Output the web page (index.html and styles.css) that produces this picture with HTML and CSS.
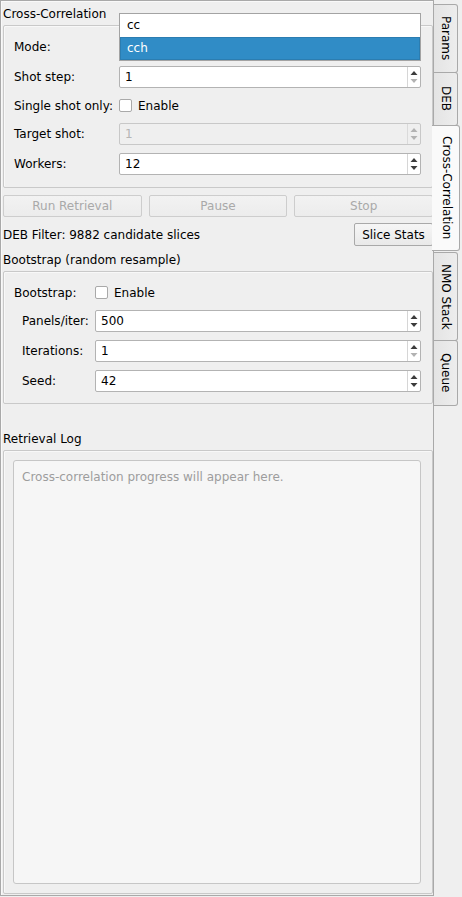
FILE: index.html
```html
<!DOCTYPE html>
<html lang="en">
<head>
<meta charset="utf-8">
<title>Cross-Correlation</title>
<link rel="stylesheet" href="styles.css">
</head>
<body>
<div class="window">
  <main class="pane">
    <div class="group-title">Cross-Correlation</div>
    <section class="frame frame-cc">
      <div class="form form-cc">
        <span class="lbl">Mode:</span>
        <div class="combo" aria-label="cch"></div>

        <span class="lbl">Shot step:</span>
        <div class="spin"><span class="val">1</span><span class="arrows"><svg width="12" height="20" viewBox="0 0 12 20"><path class="up" d="M2.5 8 L6 4 L9.5 8 Z"/><path class="dn off" d="M2.5 12 L6 16 L9.5 12 Z"/></svg></span></div>

        <span class="lbl">Single shot only:</span>
        <div class="check"><span class="box"></span><span>Enable</span></div>

        <span class="lbl">Target shot:</span>
        <div class="spin disabled"><span class="val">1</span><span class="arrows"><svg width="12" height="20" viewBox="0 0 12 20"><path class="up off" d="M2.5 8 L6 4 L9.5 8 Z"/><path class="dn off" d="M2.5 12 L6 16 L9.5 12 Z"/></svg></span></div>

        <span class="lbl">Workers:</span>
        <div class="spin"><span class="val">12</span><span class="arrows"><svg width="12" height="20" viewBox="0 0 12 20"><path class="up" d="M2.5 8 L6 4 L9.5 8 Z"/><path class="dn" d="M2.5 12 L6 16 L9.5 12 Z"/></svg></span></div>
      </div>
    </section>

    <div class="actions">
      <button class="btn" disabled>Run Retrieval</button>
      <button class="btn" disabled>Pause</button>
      <button class="btn" disabled>Stop</button>
    </div>

    <div class="filter-row">
      <span>DEB Filter: 9882 candidate slices</span>
      <button class="btn btn-stats">Slice Stats</button>
    </div>

    <div class="group-title gt-boot">Bootstrap (random resample)</div>
    <section class="frame frame-boot">
      <div class="form form-boot">
        <span class="lbl">Bootstrap:</span>
        <div class="check"><span class="box"></span><span>Enable</span></div>

        <span class="lbl sub">Panels/iter:</span>
        <div class="spin"><span class="val">500</span><span class="arrows"><svg width="12" height="20" viewBox="0 0 12 20"><path class="up" d="M2.5 8 L6 4 L9.5 8 Z"/><path class="dn" d="M2.5 12 L6 16 L9.5 12 Z"/></svg></span></div>

        <span class="lbl sub">Iterations:</span>
        <div class="spin"><span class="val">1</span><span class="arrows"><svg width="12" height="20" viewBox="0 0 12 20"><path class="up" d="M2.5 8 L6 4 L9.5 8 Z"/><path class="dn off" d="M2.5 12 L6 16 L9.5 12 Z"/></svg></span></div>

        <span class="lbl sub">Seed:</span>
        <div class="spin"><span class="val">42</span><span class="arrows"><svg width="12" height="20" viewBox="0 0 12 20"><path class="up" d="M2.5 8 L6 4 L9.5 8 Z"/><path class="dn" d="M2.5 12 L6 16 L9.5 12 Z"/></svg></span></div>
      </div>
    </section>

    <div class="group-title gt-log">Retrieval Log</div>
    <section class="frame frame-log">
      <div class="log"><span class="placeholder">Cross-correlation progress will appear here.</span></div>
    </section>
  </main>

  <nav class="tabbar">
    <div class="tab tab-params"><span class="tab-text">Params</span></div>
    <div class="tab tab-deb"><span class="tab-text">DEB</span></div>
    <div class="tab tab-cc active"><span class="tab-text">Cross-Correlation</span></div>
    <div class="tab tab-nmo"><span class="tab-text">NMO Stack</span></div>
    <div class="tab tab-queue"><span class="tab-text">Queue</span></div>
  </nav>

  <ul class="popup">
    <li class="item">cc</li>
    <li class="item current">cch</li>
  </ul>
</div>
</body>
</html>
```

FILE: styles.css
```css
* {
  box-sizing: border-box;
}

html,
body {
  margin: 0;
  padding: 0;
}

body {
  width: 462px;
  height: 897px;
  overflow: hidden;
  background: #efefef;
  color: #000;
  font-family: "DejaVu Sans", "Liberation Sans", sans-serif;
  font-size: 12px;
  line-height: 14px;
}

.window {
  position: relative;
  display: flex;
  height: 897px;
}

/* tab page frame */
.pane {
  flex: none;
  width: 434px;
  height: 896px;
  border: 1px solid #a9a9a9;
  box-shadow: inset 1px 1px 0 #f9f9f9;
  padding: 6px 0 1px 2px;
  display: flex;
  flex-direction: column;
}

.group-title {
  line-height: 15px;
  height: 15px;
  margin-bottom: 3px;
}

.gt-boot {
  margin-top: 7px;
}

.gt-log {
  margin-top: 28px;
}

.frame {
  border: 1px solid #c9c9c9;
  border-radius: 2px;
  box-shadow: inset 1px 1px 0 rgba(255, 255, 255, 0.55);
}

.frame-cc {
  padding: 10px 11px 12px 10px;
}

.frame-boot {
  padding: 11px 11px 11px 10px;
}

.frame-log {
  flex: 1;
  display: flex;
  padding: 9px 11px 9px 9px;
}

/* label / field forms */
.form {
  display: grid;
  column-gap: 5px;
  row-gap: 8px;
  align-items: center;
}

.form-cc {
  grid-template-columns: 100px 1fr;
}

.form-boot {
  grid-template-columns: 76px 1fr;
}

.lbl {
  white-space: nowrap;
}

.lbl.sub {
  padding-left: 8px;
}

.spin,
.combo {
  height: 22px;
  display: flex;
  align-items: center;
  background: #fff;
  border: 1px solid #b3b3b3;
  border-radius: 2px;
}

.spin .val {
  flex: 1;
  padding-left: 5px;
}

.spin .arrows {
  width: 13px;
  height: 20px;
  border-left: 1px solid #d6d6d6;
  display: flex;
}

.spin .arrows svg {
  display: block;
}

.spin path {
  fill: #3c3c3c;
}

.spin path.off {
  fill: #b2b2b2;
}

.spin.disabled {
  background: #efefef;
  border-color: #c8c8c8;
  color: #b5b5b5;
}

.spin.disabled .arrows {
  border-left-color: #dadada;
}

.check {
  height: 19px;
  display: flex;
  align-items: center;
  gap: 6px;
}

.check .box {
  width: 13px;
  height: 13px;
  background: #fff;
  border: 1px solid #a9a9a9;
  border-radius: 2px;
}

/* push buttons */
.btn {
  font-family: inherit;
  font-size: 12px;
  line-height: 14px;
  margin: 0;
  padding: 0 8px;
  height: 22px;
  color: #000;
  background: linear-gradient(#f6f6f6, #e9e9e9);
  border: 1px solid #a9a9a9;
  border-radius: 2px;
}

.btn:disabled {
  color: #a9a9a9;
  background: linear-gradient(#f2f2f2, #ececec);
  border-color: #cdcdcd;
}

.actions {
  margin-top: 7px;
  display: grid;
  grid-template-columns: 1fr 1fr 1fr;
  column-gap: 7px;
}

.filter-row {
  margin-top: 6px;
  display: flex;
  align-items: center;
  justify-content: space-between;
}

.btn-stats {
  height: 23px;
  width: 79px;
  padding: 0;
}

/* log view */
.log {
  flex: 1;
  background: #f6f6f6;
  border: 1px solid #c6c6c6;
  border-radius: 3px;
  padding: 9px 8px;
}

.placeholder {
  color: #9d9d9d;
}

/* east tab bar */
.tabbar {
  flex: none;
  width: 28px;
  padding-top: 4px;
  display: flex;
  flex-direction: column;
}

.tab {
  width: 24px;
  margin-top: -1px;
  border: 1px solid #a9a9a9;
  border-left: none;
  border-radius: 0 3px 3px 0;
  background: linear-gradient(to right, #e4e4e4, #ededed);
  display: flex;
  align-items: center;
  justify-content: center;
}

.tab-text {
  writing-mode: vertical-rl;
  line-height: 14px;
  white-space: nowrap;
}

.tab-params {
  margin-top: 0;
  height: 69px;
}

.tab-deb {
  height: 54px;
}

.tab-cc {
  height: 126px;
}

.tab-nmo {
  margin-top: 1px;
  height: 89px;
}

.tab-queue {
  height: 66px;
}

.tab.active {
  position: relative;
  z-index: 1;
  width: 28px;
  margin-left: -2px;
  padding-left: 2px;
  background: #fafafa;
}

/* open combo list */
.popup {
  position: absolute;
  left: 119px;
  top: 13px;
  width: 302px;
  height: 48px;
  margin: 0;
  padding: 0;
  list-style: none;
  background: #fff;
  border: 1px solid #a3a3a3;
}

.popup .item {
  height: 23px;
  line-height: 23px;
  padding-left: 7px;
}

.popup .item.current {
  background: #308cc6;
  color: #fff;
  box-shadow: inset 0 0 0 1px #2b7db1;
}
```
